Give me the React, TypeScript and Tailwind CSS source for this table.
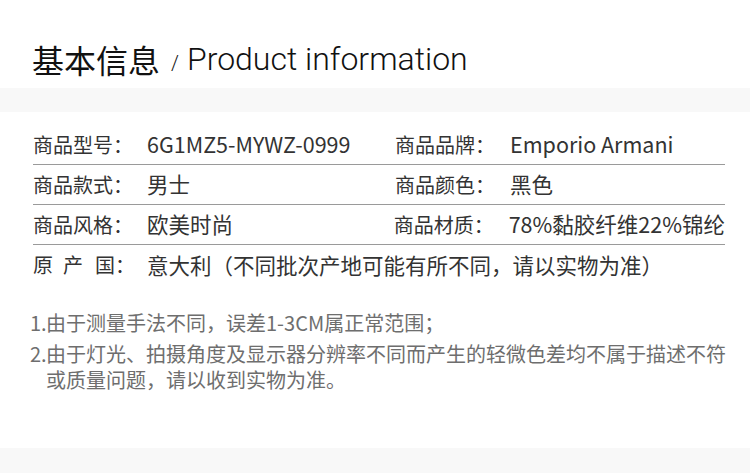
import React from "react";

const cjk = { fontFamily: '"Noto Sans CJK SC", "Noto Sans", sans-serif' };

function Row({ a, b, c, d, last }: { a: React.ReactNode; b: string; c?: string; d?: string; last?: boolean }) {
  return (
    <div className={`flex h-[40px] items-center ${last ? "" : "border-b border-[#9a9a9a]"}`}>
      {c !== undefined ? (
        <>
          <div className="flex w-[362px] items-center">
            <div className="w-[114px] shrink-0 text-[20px]">{a}</div>
            <div className="text-[21.5px]">{b}</div>
          </div>
          <div className="flex items-center">
            <div className="w-[115px] shrink-0 text-[20px]">{c}</div>
            <div className="whitespace-nowrap text-[21.5px]">{d}</div>
          </div>
        </>
      ) : (
        <div className="flex items-center">
          <div className="w-[114px] shrink-0 text-[20px]">{a}</div>
          <div className="whitespace-nowrap text-[21.5px]">{b}</div>
        </div>
      )}
    </div>
  );
}

export default function App() {
  return (
    <div className="w-[750px] h-[473px] bg-white overflow-hidden flex flex-col" style={cjk}>
      <div className="h-[88px] shrink-0 flex items-end pl-[32px] pb-[13px]">
        <span className="text-[32px] leading-none text-[#111] font-normal">基本信息</span>
        <span
          className="ml-[11px] text-[32px] leading-none text-[#111]"
          style={{ fontFamily: 'Roboto, "Noto Sans", sans-serif', fontWeight: 300 }}
        >
          <span className="text-[20px] mr-[8px]">/</span>Product information
        </span>
      </div>
      <div className="h-[24px] shrink-0 bg-[#f8f8f8]" />
      <div className="pl-[33px] pr-[25px] pt-[13px] text-[#333] shrink-0">
        <Row a="商品型号：" b="6G1MZ5-MYWZ-0999" c="商品品牌：" d="Emporio Armani" />
        <Row a="商品款式：" b="男士" c="商品颜色：" d="黑色" />
        <Row a="商品风格：" b="欧美时尚" c="商品材质：" d="78%黏胶纤维22%锦纶" />
        <Row
          a={
            <span>
              原<span className="ml-[10px]">产</span><span className="ml-[12px]">国：</span>
            </span>
          }
          b="意大利（不同批次产地可能有所不同，请以实物为准）"
          last
        />
      </div>
      <div className="flex-1 pl-[30px] pr-[20px] pt-[25px] text-[20px] text-[#6e6e6e] leading-[26px]">
        <div className="flex">
          <span className="w-[16px] shrink-0">1.</span>
          <span>由于测量手法不同，误差1-3CM属正常范围；</span>
        </div>
        <div className="flex mt-[5px]">
          <span className="w-[16px] shrink-0">2.</span>
          <span>由于灯光、拍摄角度及显示器分辨率不同而产生的轻微色差均不属于描述不符或质量问题，请以收到实物为准。</span>
        </div>
      </div>
      <div className="h-[25px] shrink-0 bg-[#f8f8f8]" />
    </div>
  );
}
